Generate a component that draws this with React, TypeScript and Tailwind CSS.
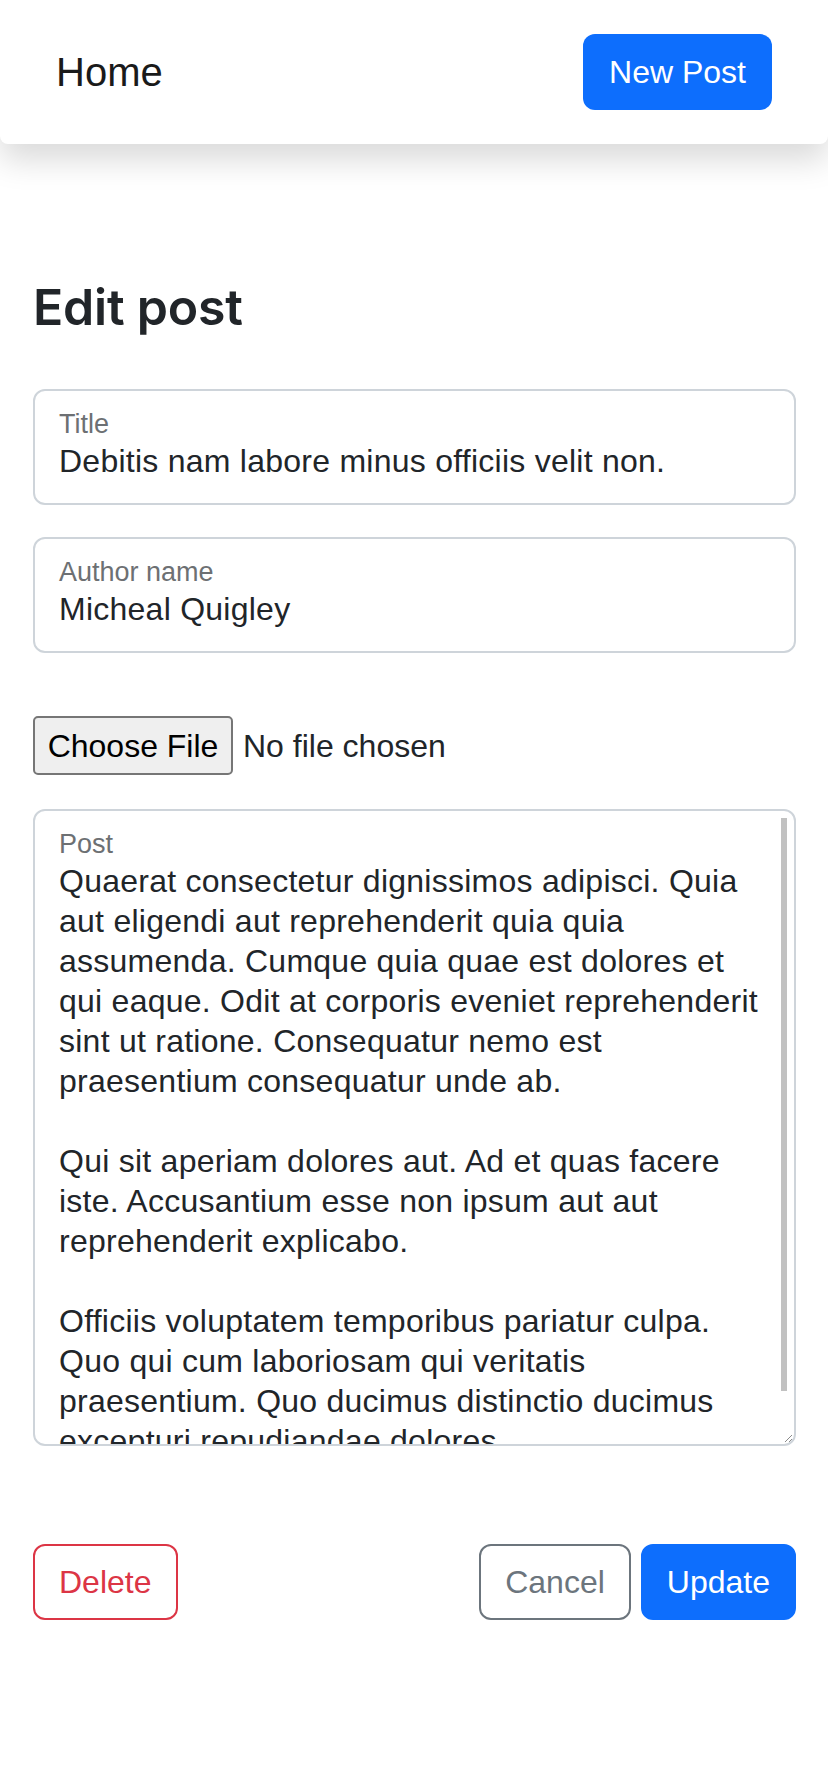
import React from "react";

const POST = `Quaerat consectetur dignissimos adipisci. Quia
aut eligendi aut reprehenderit quia quia
assumenda. Cumque quia quae est dolores et
qui eaque. Odit at corporis eveniet reprehenderit
sint ut ratione. Consequatur nemo est
praesentium consequatur unde ab.

Qui sit aperiam dolores aut. Ad et quas facere
iste. Accusantium esse non ipsum aut aut
reprehenderit explicabo.

Officiis voluptatem temporibus pariatur culpa.
Quo qui cum laboriosam qui veritatis
praesentium. Quo ducimus distinctio ducimus
excepturi repudiandae dolores.`;

function Field({ label, value, className }: { label: string; value: string; className: string }) {
  return (
    <div className={`h-[116px] rounded-[12px] border-2 border-[#ced4da] px-[24px] pt-[17px] ${className}`}>
      <div className="text-[27px] leading-[32px] text-[#6d7073]">{label}</div>
      <div className="mt-[1px] whitespace-nowrap text-[32px] leading-[40px] tracking-[0.25px] text-[#212529]">{value}</div>
    </div>
  );
}

export default function App() {
  return (
    <div className="min-h-[1792px] bg-white font-['Liberation_Sans',Arial,sans-serif] text-[#212529]">
      <nav className="flex h-[144px] items-center justify-between rounded-b-[8px] bg-white pl-[56px] pr-[56px] shadow-[0_16px_32px_rgba(0,0,0,0.15)]">
        <span className="text-[40px] leading-[48px] text-[#1a1a1a]">Home</span>
        <button className="h-[76px] rounded-[12px] bg-[#0d6efd] px-[26px] text-[32px] leading-[48px] text-white">
          New Post
        </button>
      </nav>

      <main className="pl-[33px] pr-[32px]">
        <h2 className="mt-[133px] font-['Inter',sans-serif] text-[50px] font-semibold leading-[60px] tracking-[-0.2px] text-[#212529]">
          Edit post
        </h2>

        <Field className="mt-[52px]" label="Title" value="Debitis nam labore minus officiis velit non." />
        <Field className="mt-[32px]" label="Author name" value="Micheal Quigley" />

        <div className="mt-[63px] flex h-[59px] items-center">
          <button className="h-[59px] w-[200px] rounded-[5px] border-2 border-[#767676] bg-[#efefef] text-[32px] leading-[40px] text-black">
            Choose File
          </button>
          <span className="ml-[10px] text-[32px] leading-[40px] text-[#212529]">No file chosen</span>
        </div>

        <div className="relative mt-[34px] h-[637px] overflow-hidden rounded-[12px] border-2 border-[#ced4da] px-[24px] pt-[17px]">
          <div className="text-[27px] leading-[32px] text-[#6d7073]">Post</div>
          <div className="mt-[1px] whitespace-pre text-[32px] leading-[40px] tracking-[0.25px] text-[#212529]">{POST}</div>
          <div className="absolute bottom-[53px] right-[7px] top-[7px] w-[6px] bg-[#c1c1c1]" />
          <svg className="absolute bottom-[1px] right-[1px]" width="10" height="10" viewBox="0 0 10 10">
            <line x1="9" y1="2" x2="2" y2="9" stroke="#8a8a8a" strokeWidth="1" />
            <line x1="9" y1="6" x2="6" y2="9" stroke="#8a8a8a" strokeWidth="1" />
          </svg>
        </div>

        <div className="mt-[98px] flex items-center justify-between">
          <button className="h-[76px] rounded-[12px] border-2 border-[#dc3545] px-[24px] text-[32px] leading-[48px] text-[#dc3545]">
            Delete
          </button>
          <div className="flex gap-[10px]">
            <button className="h-[76px] rounded-[12px] border-2 border-[#6c757d] px-[24px] text-[32px] leading-[48px] text-[#6c757d]">
              Cancel
            </button>
            <button className="h-[76px] rounded-[12px] border-2 border-[#0d6efd] bg-[#0d6efd] px-[24px] text-[32px] leading-[48px] text-white">
              Update
            </button>
          </div>
        </div>
      </main>
    </div>
  );
}
